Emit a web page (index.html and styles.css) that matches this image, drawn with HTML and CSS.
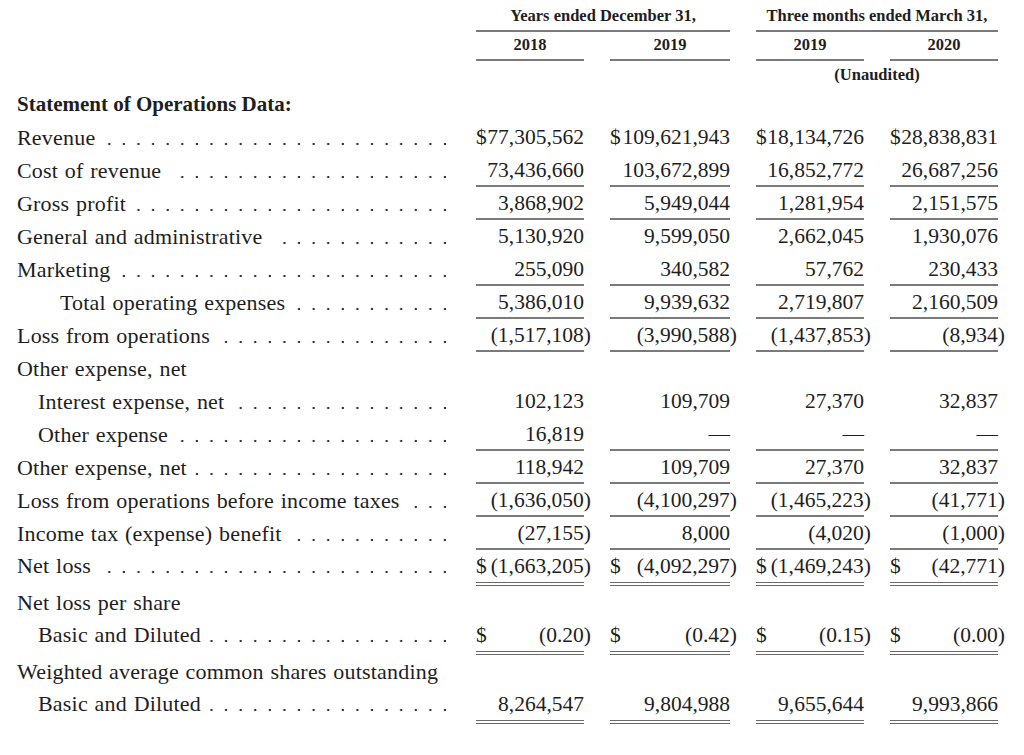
FILE: index.html
```html
<!DOCTYPE html>
<html lang="en">
<head>
<meta charset="utf-8">
<title>Statement of Operations Data</title>
<link rel="stylesheet" href="styles.css">
</head>
<body>
<div class="fin">
  <div class="hrow ha">
    <div class="lab"></div>
    <div class="span12 hline">Years ended December 31,</div>
    <div class="span34 hline">Three months ended March 31,</div>
  </div>
  <div class="hrow hb">
    <div class="lab"></div>
    <div class="hline">2018</div>
    <div class="hline">2019</div>
    <div class="hline">2019</div>
    <div class="hline">2020</div>
  </div>
  <div class="hrow hc">
    <div class="lab"></div>
    <div class="span34">(Unaudited)</div>
  </div>

  <div class="row sec"><div class="lab">Statement of Operations Data:</div></div>

  <div class="row">
    <div class="lab dots"><span>Revenue</span></div>
    <div class="num"><span>$</span><span class="v">77,305,562</span></div>
    <div class="num"><span>$</span><span class="v">109,621,943</span></div>
    <div class="num"><span>$</span><span class="v">18,134,726</span></div>
    <div class="num"><span>$</span><span class="v">28,838,831</span></div>
  </div>
  <div class="row u">
    <div class="lab dots"><span>Cost of revenue</span></div>
    <div class="num"><span class="v">73,436,660</span></div>
    <div class="num"><span class="v">103,672,899</span></div>
    <div class="num"><span class="v">16,852,772</span></div>
    <div class="num"><span class="v">26,687,256</span></div>
  </div>
  <div class="row u">
    <div class="lab dots"><span>Gross profit</span></div>
    <div class="num"><span class="v">3,868,902</span></div>
    <div class="num"><span class="v">5,949,044</span></div>
    <div class="num"><span class="v">1,281,954</span></div>
    <div class="num"><span class="v">2,151,575</span></div>
  </div>
  <div class="row">
    <div class="lab dots wide-gap"><span>General and administrative</span></div>
    <div class="num"><span class="v">5,130,920</span></div>
    <div class="num"><span class="v">9,599,050</span></div>
    <div class="num"><span class="v">2,662,045</span></div>
    <div class="num"><span class="v">1,930,076</span></div>
  </div>
  <div class="row u">
    <div class="lab dots"><span>Marketing</span></div>
    <div class="num"><span class="v">255,090</span></div>
    <div class="num"><span class="v">340,582</span></div>
    <div class="num"><span class="v">57,762</span></div>
    <div class="num"><span class="v">230,433</span></div>
  </div>
  <div class="row u">
    <div class="lab dots in2"><span>Total operating expenses</span></div>
    <div class="num"><span class="v">5,386,010</span></div>
    <div class="num"><span class="v">9,939,632</span></div>
    <div class="num"><span class="v">2,719,807</span></div>
    <div class="num"><span class="v">2,160,509</span></div>
  </div>
  <div class="row u">
    <div class="lab dots"><span>Loss from operations</span></div>
    <div class="num"><span class="v neg">(1,517,108)</span></div>
    <div class="num"><span class="v neg">(3,990,588)</span></div>
    <div class="num"><span class="v neg">(1,437,853)</span></div>
    <div class="num"><span class="v neg">(8,934)</span></div>
  </div>
  <div class="row"><div class="lab">Other expense, net</div></div>
  <div class="row">
    <div class="lab dots in1"><span>Interest expense, net</span></div>
    <div class="num"><span class="v">102,123</span></div>
    <div class="num"><span class="v">109,709</span></div>
    <div class="num"><span class="v">27,370</span></div>
    <div class="num"><span class="v">32,837</span></div>
  </div>
  <div class="row u">
    <div class="lab dots in1"><span>Other expense</span></div>
    <div class="num"><span class="v">16,819</span></div>
    <div class="num"><span class="v">—</span></div>
    <div class="num"><span class="v">—</span></div>
    <div class="num"><span class="v">—</span></div>
  </div>
  <div class="row u">
    <div class="lab dots"><span>Other expense, net</span></div>
    <div class="num"><span class="v">118,942</span></div>
    <div class="num"><span class="v">109,709</span></div>
    <div class="num"><span class="v">27,370</span></div>
    <div class="num"><span class="v">32,837</span></div>
  </div>
  <div class="row u">
    <div class="lab dots"><span>Loss from operations before income taxes</span></div>
    <div class="num"><span class="v neg">(1,636,050)</span></div>
    <div class="num"><span class="v neg">(4,100,297)</span></div>
    <div class="num"><span class="v neg">(1,465,223)</span></div>
    <div class="num"><span class="v neg">(41,771)</span></div>
  </div>
  <div class="row u">
    <div class="lab dots"><span>Income tax (expense) benefit</span></div>
    <div class="num"><span class="v neg">(27,155)</span></div>
    <div class="num"><span class="v">8,000</span></div>
    <div class="num"><span class="v neg">(4,020)</span></div>
    <div class="num"><span class="v neg">(1,000)</span></div>
  </div>
  <div class="row dbl">
    <div class="lab dots"><span>Net loss</span></div>
    <div class="num"><span>$</span><span class="v neg">(1,663,205)</span></div>
    <div class="num"><span>$</span><span class="v neg">(4,092,297)</span></div>
    <div class="num"><span>$</span><span class="v neg">(1,469,243)</span></div>
    <div class="num"><span>$</span><span class="v neg">(42,771)</span></div>
  </div>
  <div class="row"><div class="lab">Net loss per share</div></div>
  <div class="row dbl">
    <div class="lab dots in1"><span>Basic and Diluted</span></div>
    <div class="num"><span>$</span><span class="v neg">(0.20)</span></div>
    <div class="num"><span>$</span><span class="v neg">(0.42)</span></div>
    <div class="num"><span>$</span><span class="v neg">(0.15)</span></div>
    <div class="num"><span>$</span><span class="v neg">(0.00)</span></div>
  </div>
  <div class="row"><div class="lab">Weighted average common shares outstanding</div></div>
  <div class="row dbl">
    <div class="lab dots in1"><span>Basic and Diluted</span></div>
    <div class="num"><span class="v">8,264,547</span></div>
    <div class="num"><span class="v">9,804,988</span></div>
    <div class="num"><span class="v">9,655,644</span></div>
    <div class="num"><span class="v">9,993,866</span></div>
  </div>
</div>
</body>
</html>
```

FILE: styles.css
```css
* { box-sizing: border-box; }
html, body { margin: 0; padding: 0; background: #fff; }
body {
  font-family: "Liberation Serif", "Times New Roman", serif;
  color: #1e1e1e;
  font-size: 21.5px;
}
.fin { padding-left: 17px; width: 1024px; }

.row, .hrow {
  display: grid;
  grid-template-columns: 433px 108px 120px 108px 108px;
  column-gap: 26px;
}
.row { height: 33px; line-height: 33px; }
.row.dbl { height: 36px; line-height: 32px; }

.hrow { font-weight: bold; font-size: 16.5px; text-align: center; white-space: nowrap; }
.ha { height: 32px; line-height: 32px; }
.hb { height: 29px; line-height: 26px; }
.hc { height: 27px; line-height: 27px; }
.hline { box-shadow: inset 0 -2px #7a7a7a; }
.span12 { grid-column: 2 / 4; }
.span34 { grid-column: 4 / 6; }

.lab {
  white-space: nowrap;
  overflow: hidden;
  padding-right: 3px;
  font-size: 22px;
  letter-spacing: 0.2px;
  word-spacing: 1px;
}
.sec .lab { font-weight: bold; font-size: 21px; letter-spacing: 0; word-spacing: 0; }
.in1 { padding-left: 21px; }
.in2 { padding-left: 43px; }

.lab.dots {
  background-image: radial-gradient(circle at calc(100% - 2px) 50%, #333 0, #333 0.95px, rgba(51,51,51,0) 1.6px);
  background-size: 14.6px 4px;
  background-repeat: repeat-x;
  background-position: right 3px top 21px;
  background-clip: content-box;
}
.dbl .lab.dots { background-position: right 3px top 20px; }
.lab.dots > span { background: #fff; padding-right: 8px; }
.lab.dots.wide-gap > span { padding-right: 13px; }

.num { display: flex; justify-content: space-between; white-space: nowrap; }
.num .v { margin-left: auto; }
.num .neg { margin-right: -7px; }
.row.u .num { box-shadow: inset 0 -2px #7a7a7a; }
.row.dbl .num { border-bottom: 4px double #6a6a6a; }
```
